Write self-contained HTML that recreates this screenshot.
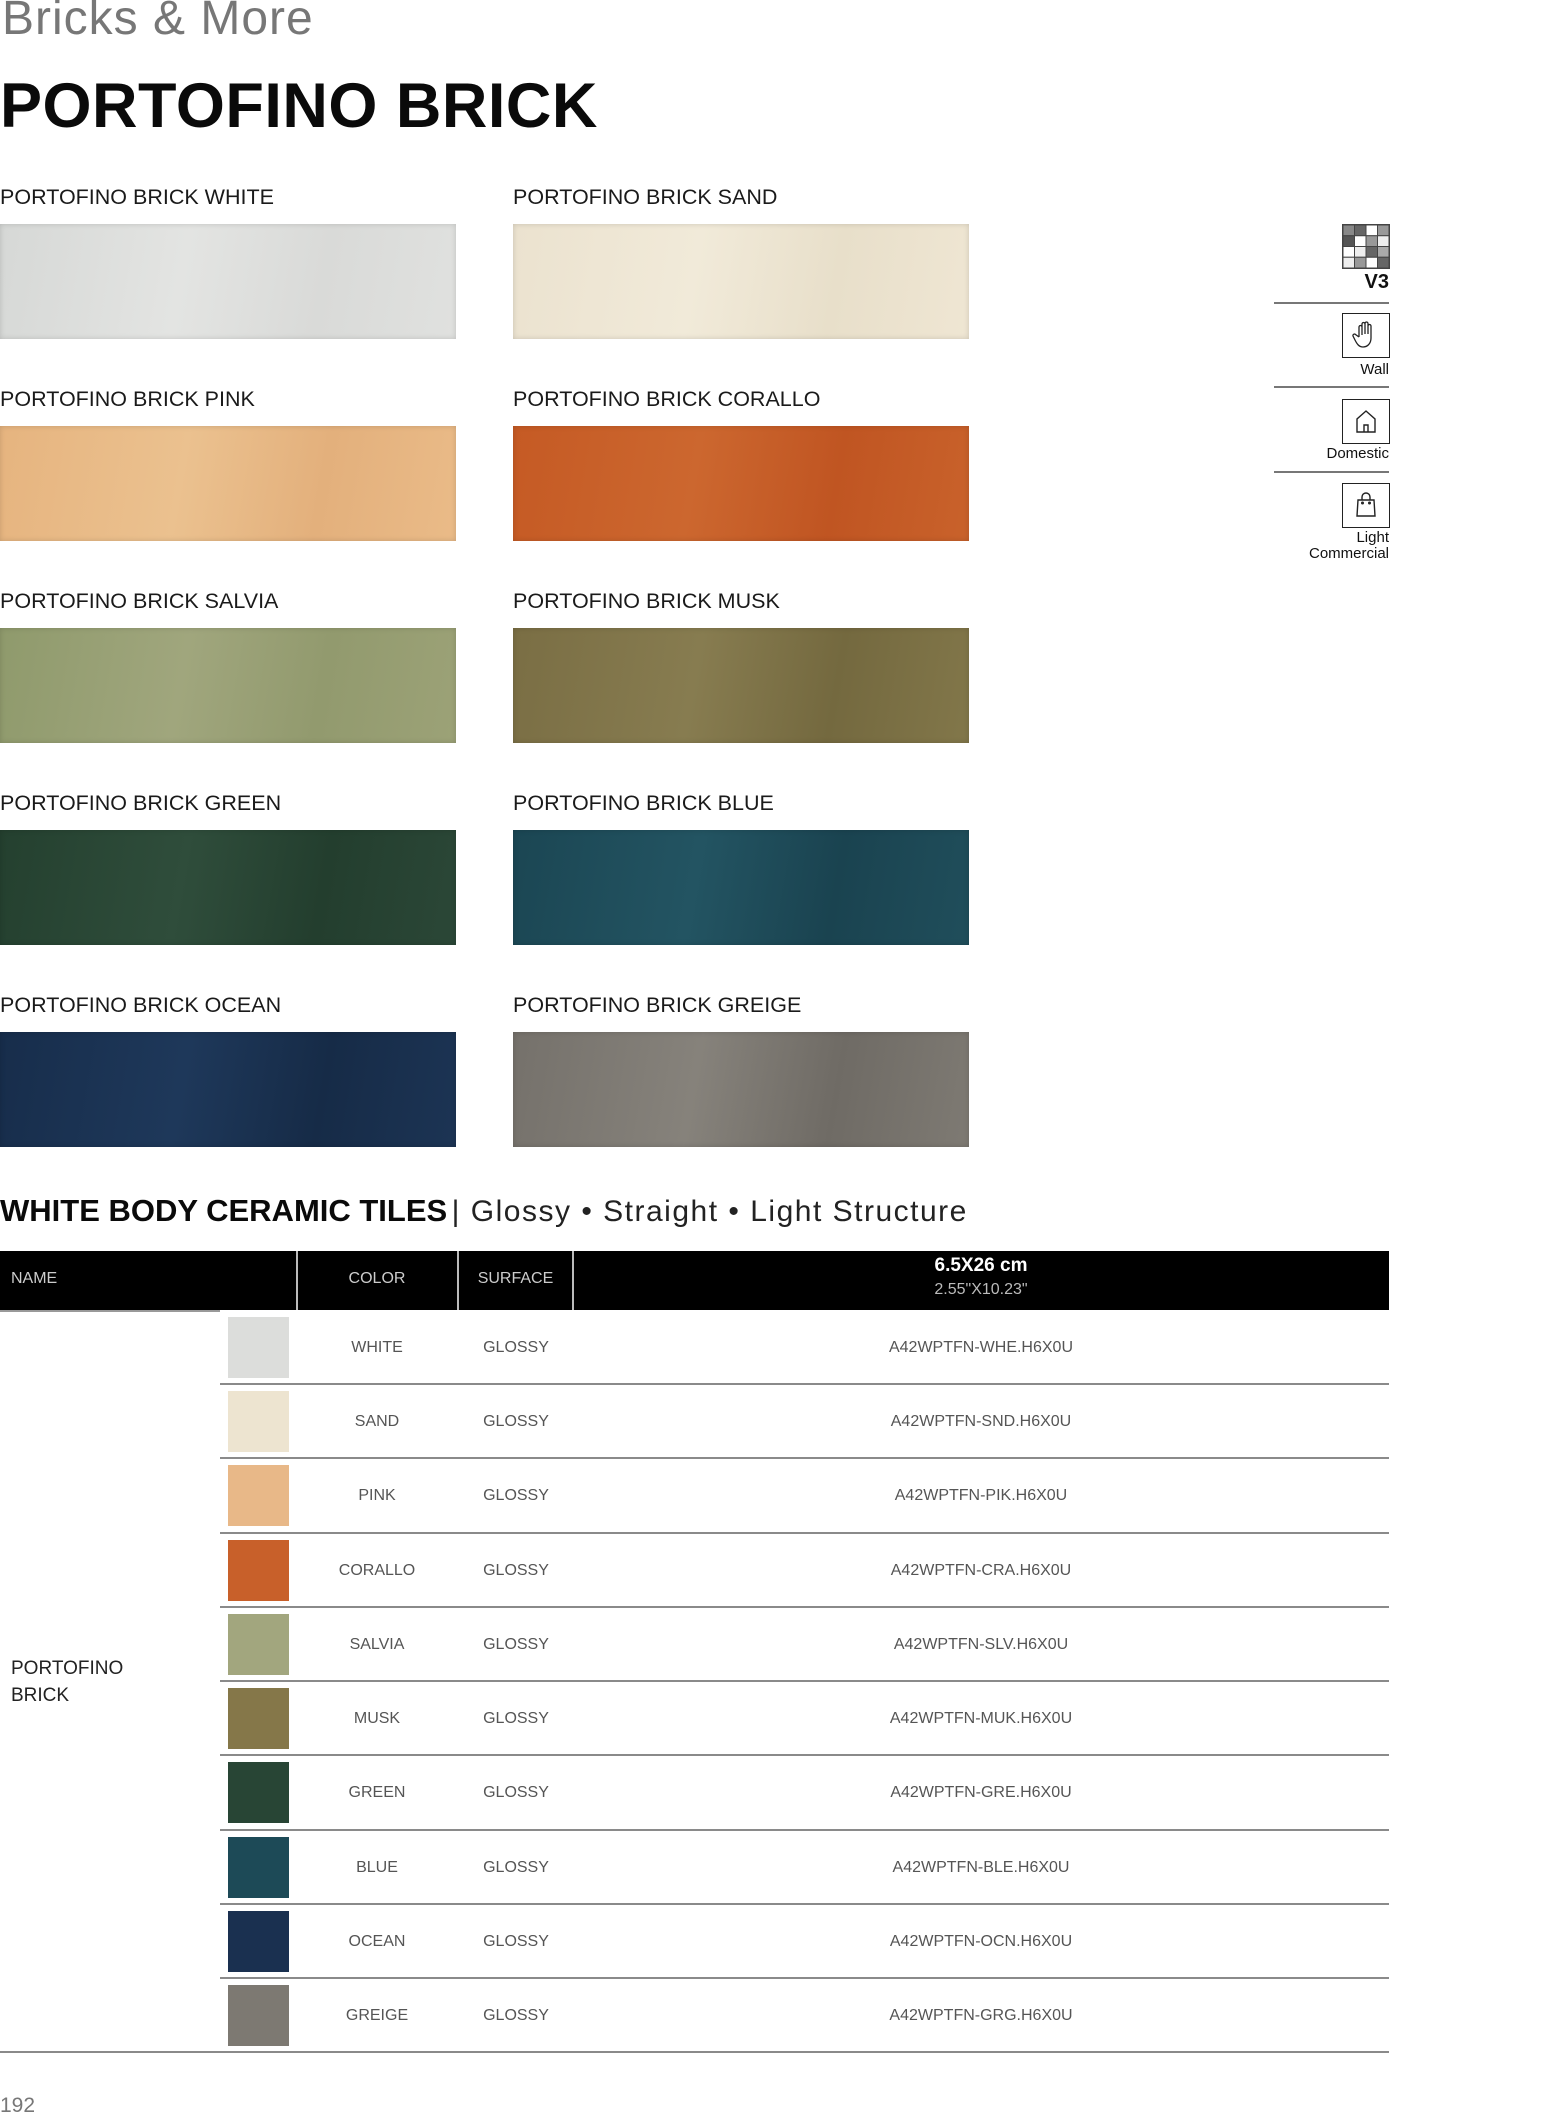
<!DOCTYPE html>
<html><head><meta charset="utf-8"><style>
*{margin:0;padding:0;box-sizing:border-box}
body{width:1550px;height:2118px;background:#fff;position:relative;overflow:hidden;font-family:"Liberation Sans",sans-serif;color:#111}
.a{position:absolute}
.lbl{font-size:21.5px;color:#1a1a1a;white-space:nowrap}
.tile{position:absolute;width:456px;height:115px;box-shadow:inset 0 0 6px rgba(0,0,0,.15)}
.cell{position:absolute;font-size:16px;color:#555;text-align:center;white-space:nowrap}
.line{position:absolute;left:220px;width:1169px;height:2px;background:#8a8a8a}
.th{position:absolute;left:228px;width:61px;height:61px}
.ib{position:absolute;left:1342px;width:48px;height:45px;border:1.5px solid #222}
.il{position:absolute;font-size:15px;color:#111;text-align:right;right:161px;white-space:nowrap;line-height:16px}
.hr{position:absolute;left:1274px;width:115px;height:1.5px;background:#777}
</style></head><body>
<div class="a" style="left:2px;top:-9px;font-size:48px;color:#777;letter-spacing:1px;font-weight:300">Bricks &amp; More</div>
<div class="a" style="left:0;top:70px;font-size:63px;font-weight:bold;color:#0a0a0a;letter-spacing:0.5px">PORTOFINO BRICK</div>

<div class="lbl a" style="left:0;top:185px">PORTOFINO BRICK WHITE</div>
<div class="lbl a" style="left:513px;top:185px">PORTOFINO BRICK SAND</div>
<div class="tile" style="left:0;top:224px;background:linear-gradient(100deg,#d6d8d6,#e3e4e2 40%,#d9dad8 70%,#e0e1df)"></div>
<div class="tile" style="left:513px;top:224px;background:linear-gradient(100deg,#ebe2cf,#f1ead9 40%,#e8dfca 70%,#efe6d3)"></div>

<div class="lbl a" style="left:0;top:387px">PORTOFINO BRICK PINK</div>
<div class="lbl a" style="left:513px;top:387px">PORTOFINO BRICK CORALLO</div>
<div class="tile" style="left:0;top:426px;background:linear-gradient(100deg,#e6b47f,#ebc18f 40%,#e3b07c 70%,#eabb88)"></div>
<div class="tile" style="left:513px;top:426px;background:linear-gradient(100deg,#c55a24,#cc672f 40%,#c05522 70%,#c9622b)"></div>

<div class="lbl a" style="left:0;top:589px">PORTOFINO BRICK SALVIA</div>
<div class="lbl a" style="left:513px;top:589px">PORTOFINO BRICK MUSK</div>
<div class="tile" style="left:0;top:628px;background:linear-gradient(100deg,#8f9a6c,#a0a67d 40%,#929a6e 70%,#9ca277)"></div>
<div class="tile" style="left:513px;top:628px;background:linear-gradient(100deg,#7a6e44,#877c50 40%,#74693f 70%,#82774a)"></div>

<div class="lbl a" style="left:0;top:791px">PORTOFINO BRICK GREEN</div>
<div class="lbl a" style="left:513px;top:791px">PORTOFINO BRICK BLUE</div>
<div class="tile" style="left:0;top:830px;background:linear-gradient(100deg,#24402f,#2f4d3b 40%,#233e2e 70%,#2b4737)"></div>
<div class="tile" style="left:513px;top:830px;background:linear-gradient(100deg,#1b4653,#235462 40%,#1a4350 70%,#204e5b)"></div>

<div class="lbl a" style="left:0;top:993px">PORTOFINO BRICK OCEAN</div>
<div class="lbl a" style="left:513px;top:993px">PORTOFINO BRICK GREIGE</div>
<div class="tile" style="left:0;top:1032px;background:linear-gradient(100deg,#172d4b,#1e385a 40%,#162b47 70%,#1c3454)"></div>
<div class="tile" style="left:513px;top:1032px;background:linear-gradient(100deg,#75716b,#86827b 40%,#6f6b65 70%,#7e7a73)"></div>

<!-- icons -->
<svg class="a" style="left:1342px;top:224px" width="48" height="45" viewBox="0 0 48 45">
<rect width="48" height="45" fill="#444"/>
<g stroke="#444" stroke-width="1">
<rect x="1" y="1" width="11.5" height="10.75" fill="#888"/><rect x="12.5" y="1" width="11.5" height="10.75" fill="#666"/><rect x="24" y="1" width="11.5" height="10.75" fill="#fff"/><rect x="35.5" y="1" width="11.5" height="10.75" fill="#999"/>
<rect x="1" y="11.75" width="11.5" height="10.75" fill="#555"/><rect x="12.5" y="11.75" width="11.5" height="10.75" fill="#fff"/><rect x="24" y="11.75" width="11.5" height="10.75" fill="#999"/><rect x="35.5" y="11.75" width="11.5" height="10.75" fill="#eee"/>
<rect x="1" y="22.5" width="11.5" height="10.75" fill="#fff"/><rect x="12.5" y="22.5" width="11.5" height="10.75" fill="#eee"/><rect x="24" y="22.5" width="11.5" height="10.75" fill="#666"/><rect x="35.5" y="22.5" width="11.5" height="10.75" fill="#aaa"/>
<rect x="1" y="33.25" width="11.5" height="10.75" fill="#eee"/><rect x="12.5" y="33.25" width="11.5" height="10.75" fill="#999"/><rect x="24" y="33.25" width="11.5" height="10.75" fill="#fff"/><rect x="35.5" y="33.25" width="11.5" height="10.75" fill="#666"/>
</g></svg>
<div class="il" style="top:272px;font-size:20px;font-weight:bold;line-height:20px">V3</div>
<div class="hr" style="top:302px"></div>
<div class="ib" style="top:313px"></div>
<svg class="a" style="left:1352px;top:320px" width="28" height="30" viewBox="0 0 28 30" fill="none" stroke="#222" stroke-width="1.3"><path d="M7 17V7a1.5 1.5 0 0 1 3 0v8M10 14V4a1.5 1.5 0 0 1 3 0v10M13 13V3.5a1.5 1.5 0 0 1 3 0V14M16 14V6a1.5 1.5 0 0 1 3 0v12c0 6-4 9-8 9s-6-3-8-7l-2-4a1.5 1.5 0 0 1 2.5-1.5L7 17"/></svg>
<div class="il" style="top:362px">Wall</div>
<div class="hr" style="top:386px"></div>
<div class="ib" style="top:399px"></div>
<svg class="a" style="left:1354px;top:406px" width="24" height="30" viewBox="0 0 24 30" fill="none" stroke="#222" stroke-width="1.4"><path d="M3 26V13L12 5l9 8v13zM10 26v-7h4v7"/></svg>
<div class="il" style="top:446px">Domestic</div>
<div class="hr" style="top:471px"></div>
<div class="ib" style="top:483px"></div>
<svg class="a" style="left:1354px;top:489px" width="24" height="32" viewBox="0 0 24 32" fill="none" stroke="#222" stroke-width="1.4"><path d="M4 11h16l1 16H3zM8 11V8a4 4 0 0 1 8 0v3"/><circle cx="8.5" cy="14" r=".8"/><circle cx="15.5" cy="14" r=".8"/></svg>
<div class="il" style="top:530px">Light</div>
<div class="il" style="top:546px">Commercial</div>

<div class="a" style="left:0;top:1193px;white-space:nowrap"><b style="color:#0a0a0a;font-size:31px">WHITE BODY CERAMIC TILES</b> <span style="color:#222;font-size:30px;letter-spacing:1.5px">| Glossy • Straight • Light Structure</span></div>

<!-- table header -->
<div class="a" style="left:0;top:1251px;width:1389px;height:59px;background:#000"></div>
<div class="a" style="left:296px;top:1251px;width:2px;height:59px;background:#bbb"></div>
<div class="a" style="left:457px;top:1251px;width:2px;height:59px;background:#bbb"></div>
<div class="a" style="left:572px;top:1251px;width:2px;height:59px;background:#bbb"></div>
<div class="a" style="left:0;top:1310px;width:220px;height:2px;background:#999"></div>
<div class="cell" style="left:11px;top:1270px;color:#ccc;text-align:left">NAME</div>
<div class="cell" style="left:327px;top:1270px;width:100px;color:#ccc">COLOR</div>
<div class="cell" style="left:459px;top:1270px;width:113px;color:#ccc">SURFACE</div>
<div class="cell" style="left:881px;top:1255px;width:200px;color:#fff;font-weight:bold;font-size:19px">6.5X26 cm</div>
<div class="cell" style="left:881px;top:1281px;width:200px;color:#bbb">2.55"X10.23"</div>

<div class="cell" style="left:11px;top:1655px;text-align:left;color:#222;font-size:19px;line-height:27px">PORTOFINO<br>BRICK</div>

<div class="th" style="top:1317px;background:#dcdddb"></div><div class="cell" style="left:327px;top:1339px;width:100px">WHITE</div><div class="cell" style="left:466px;top:1339px;width:100px">GLOSSY</div><div class="cell" style="left:831px;top:1339px;width:300px">A42WPTFN-WHE.H6X0U</div><div class="line" style="top:1383px"></div>
<div class="th" style="top:1391px;background:#ede4d0"></div><div class="cell" style="left:327px;top:1413px;width:100px">SAND</div><div class="cell" style="left:466px;top:1413px;width:100px">GLOSSY</div><div class="cell" style="left:831px;top:1413px;width:300px">A42WPTFN-SND.H6X0U</div><div class="line" style="top:1457px"></div>
<div class="th" style="top:1465px;background:#e8b888"></div><div class="cell" style="left:327px;top:1487px;width:100px">PINK</div><div class="cell" style="left:466px;top:1487px;width:100px">GLOSSY</div><div class="cell" style="left:831px;top:1487px;width:300px">A42WPTFN-PIK.H6X0U</div><div class="line" style="top:1532px"></div>
<div class="th" style="top:1540px;background:#c8602a"></div><div class="cell" style="left:327px;top:1562px;width:100px">CORALLO</div><div class="cell" style="left:466px;top:1562px;width:100px">GLOSSY</div><div class="cell" style="left:831px;top:1562px;width:300px">A42WPTFN-CRA.H6X0U</div><div class="line" style="top:1606px"></div>
<div class="th" style="top:1614px;background:#a2a67e"></div><div class="cell" style="left:327px;top:1636px;width:100px">SALVIA</div><div class="cell" style="left:466px;top:1636px;width:100px">GLOSSY</div><div class="cell" style="left:831px;top:1636px;width:300px">A42WPTFN-SLV.H6X0U</div><div class="line" style="top:1680px"></div>
<div class="th" style="top:1688px;background:#857749"></div><div class="cell" style="left:327px;top:1710px;width:100px">MUSK</div><div class="cell" style="left:466px;top:1710px;width:100px">GLOSSY</div><div class="cell" style="left:831px;top:1710px;width:300px">A42WPTFN-MUK.H6X0U</div><div class="line" style="top:1754px"></div>
<div class="th" style="top:1762px;background:#284535"></div><div class="cell" style="left:327px;top:1784px;width:100px">GREEN</div><div class="cell" style="left:466px;top:1784px;width:100px">GLOSSY</div><div class="cell" style="left:831px;top:1784px;width:300px">A42WPTFN-GRE.H6X0U</div><div class="line" style="top:1829px"></div>
<div class="th" style="top:1837px;background:#1d4a57"></div><div class="cell" style="left:327px;top:1859px;width:100px">BLUE</div><div class="cell" style="left:466px;top:1859px;width:100px">GLOSSY</div><div class="cell" style="left:831px;top:1859px;width:300px">A42WPTFN-BLE.H6X0U</div><div class="line" style="top:1903px"></div>
<div class="th" style="top:1911px;background:#1a3050"></div><div class="cell" style="left:327px;top:1933px;width:100px">OCEAN</div><div class="cell" style="left:466px;top:1933px;width:100px">GLOSSY</div><div class="cell" style="left:831px;top:1933px;width:300px">A42WPTFN-OCN.H6X0U</div><div class="line" style="top:1977px"></div>
<div class="th" style="top:1985px;background:#7d7972"></div><div class="cell" style="left:327px;top:2007px;width:100px">GREIGE</div><div class="cell" style="left:466px;top:2007px;width:100px">GLOSSY</div><div class="cell" style="left:831px;top:2007px;width:300px">A42WPTFN-GRG.H6X0U</div>
<div class="a" style="left:0;top:2051px;width:1389px;height:2px;background:#8a8a8a"></div>

<div class="a" style="left:0;top:2094px;font-size:21px;color:#777">192</div>
</body></html>
